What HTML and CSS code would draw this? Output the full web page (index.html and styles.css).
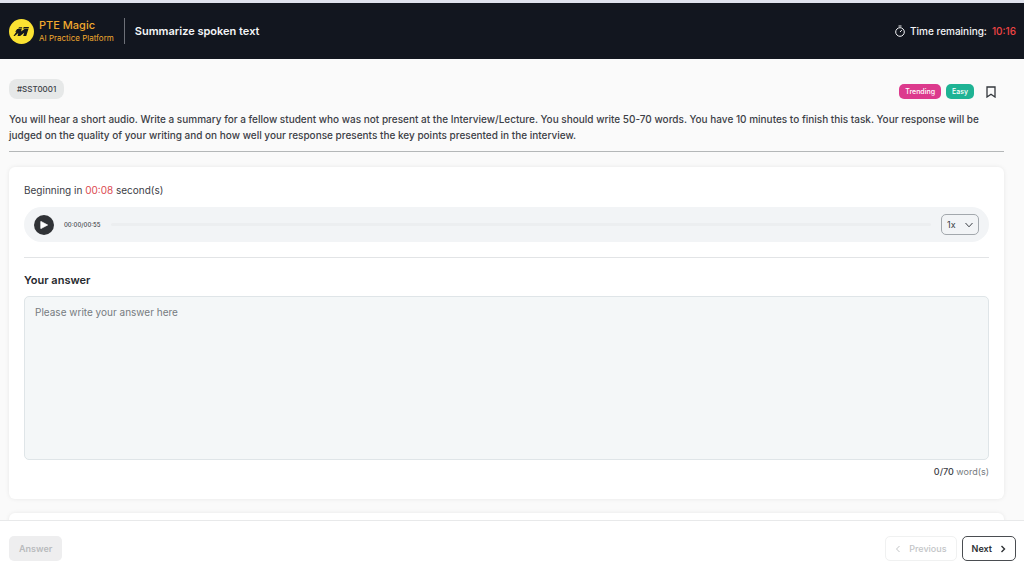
FILE: index.html
```html
<!DOCTYPE html>
<html lang="en">
<head>
    <meta charset="UTF-8">
    <meta name="viewport" content="width=device-width, initial-scale=1.0">
    <title>PTE Magic - Summarize spoken text</title>
    <link rel="stylesheet" href="styles.css">
</head>
<body>
    <!-- Top bar -->
    <header class="header">
        <div class="brand">
            <svg class="brand-logo" viewBox="0 0 26 26" aria-hidden="true">
                <circle cx="13" cy="13" r="13" fill="#fbe232"/>
                <path d="M8.500 10.500h4.700l-.6 2.600 3.400-2.600h4.200l-2.300 7.300h-3.200l1.200-3.600-4.300 3.600H8.900l.7-3.300-3.600 3.300H4.600l3.100-4.600H6.400z" fill="#14171d"/>
                <path d="M10.500 8.600h3.300l-.4 1.300h-4zM15.500 8.300h5.300l-.5 1.600h-6z" fill="#14171d"/>
            </svg>
            <div class="brand-text">
                <span class="brand-name">PTE Magic</span>
                <span class="brand-tagline">AI Practice Platform</span>
            </div>
        </div>
        <h1 class="page-title">Summarize spoken text</h1>
        <div class="timer">
            <svg class="timer-icon" viewBox="0 0 12 12" aria-hidden="true">
                <circle cx="6" cy="7" r="4.300"/>
                <path d="M4.500 1h3M6 7l1.800-1.900"/>
            </svg>
            <span>Time remaining:</span>
            <span class="timer-value">10:16</span>
        </div>
    </header>

    <main class="content">
        <!-- Question info -->
        <section class="question">
            <div class="question-top">
                <span class="question-id">#SST0001</span>
                <div class="tags">
                    <span class="tag tag-trending">Trending</span>
                    <span class="tag tag-easy">Easy</span>
                    <button class="bookmark" type="button" aria-label="Bookmark">
                        <svg viewBox="0 0 10 12" aria-hidden="true"><path d="M1 1h8v10L5 8.300 1 11z"/></svg>
                    </button>
                </div>
            </div>
            <p class="instructions">You will hear a short audio. Write a summary for a fellow student who was not present at the Interview/Lecture. You should write 50-70 words. You have 10 minutes to finish this task. Your response will be judged on the quality of your writing and on how well your response presents the key points presented in the interview.</p>
        </section>

        <!-- Audio and answer -->
        <section class="card">
            <p class="countdown">Beginning in <span class="countdown-value">00:08</span> second(s)</p>
            <div class="player">
                <button class="play" type="button" aria-label="Play">
                    <svg viewBox="0 0 10 10" aria-hidden="true"><path d="M1 .5L9.500 5 1 9.500z"/></svg>
                </button>
                <span class="player-time">00:00/00:55</span>
                <div class="player-track"></div>
                <div class="speed">
                    <select class="speed-select" aria-label="Playback speed">
                        <option>1x</option>
                    </select>
                    <svg class="speed-arrow" viewBox="0 0 8 6" aria-hidden="true"><path d="M.5 1L4 4.800 7.500 1"/></svg>
                </div>
            </div>
            <label class="answer-label" for="answer">Your answer</label>
            <textarea class="answer" id="answer" placeholder="Please write your answer here"></textarea>
            <p class="word-count"><span class="word-number">0/70</span> word(s)</p>
        </section>

        <section class="card"></section>
    </main>

    <!-- Bottom actions -->
    <footer class="footer">
        <button class="btn btn-answer" type="button" disabled>Answer</button>
        <div class="footer-nav">
            <button class="btn btn-previous" type="button" disabled>
                <svg class="btn-icon" viewBox="0 0 6 8" aria-hidden="true"><path d="M4.500 1L1.500 4l3 3"/></svg>
                Previous
            </button>
            <button class="btn btn-next" type="button">
                Next
                <svg class="btn-icon" viewBox="0 0 6 8" aria-hidden="true"><path d="M1.500 1l3 3-3 3"/></svg>
            </button>
        </div>
    </footer>
</body>
</html>
```

FILE: styles.css
```css
* {
    box-sizing: border-box;
}
body {
    margin: 0;
    height: 100vh;
    display: flex;
    flex-direction: column;
    overflow: hidden; /* only the content area moves */
    font-family: Inter, "Liberation Sans", sans-serif;
    font-size: 10px;
    line-height: 16px;
    color: #3c4046;
    background-color: #fafafa;
}
p, h1 {
    margin: 0;
}
button, select, textarea {
    font-family: inherit;
}
svg {
    display: block;
    fill: none;
    stroke: currentColor;
}

/* Top bar */
.header {
    flex: none;
    display: flex;
    align-items: center;
    height: 59px;
    padding: 0 8px 0 9px;
    color: #f4f5f7;
    background-color: #12161f;
    border-top: 3px solid #dfe2ec;
}
.brand {
    display: flex;
    align-items: center;
    gap: 5px;
    padding-right: 10px;
    border-right: 1px solid #6d7078;
}
.brand-logo {
    width: 25px;
    height: 25px;
    stroke: none;
}
.brand-text {
    display: flex;
    flex-direction: column;
    color: #f0a92e;
}
.brand-name {
    font-size: 11px;
    font-weight: 500;
    line-height: 14px;
}
.brand-tagline {
    font-size: 8px;
    line-height: 12px;
}
.page-title {
    margin-left: 10px;
    font-size: 11px;
    font-weight: 600;
}
.timer {
    display: flex;
    align-items: center;
    gap: 4px;
    margin-left: auto;
    font-weight: 500;
}
.timer-icon {
    width: 12px;
    height: 12px;
}
.timer-value {
    margin-left: 1px;
    color: #ef4444;
}

.content {
    flex: 1;
    min-height: 0;
    overflow: hidden;
    padding: 20px 20px 0 9px;
}
.question {
    padding-bottom: 8px;
    margin-bottom: 15px;
    border-bottom: 1px solid #b4b7b8;
}
.question-top {
    display: flex;
    justify-content: space-between;
    margin-bottom: 12px;
}
.question-id {
    padding: 2px 8px;
    font-size: 8px;
    font-weight: 500;
    background-color: #e6e8e8;
    border-radius: 8px;
}
.tags {
    display: flex;
    align-items: center;
    gap: 5px;
    padding-top: 5px;
    margin-right: 8px;
}
.tag {
    padding: 0 6px;
    font-size: 7px;
    font-weight: 500;
    line-height: 15px;
    color: #fff;
    border-radius: 5px;
}
.tag-trending {
    background-color: #dc3a8d;
}
.tag-easy {
    background-color: #1eb394;
}
.bookmark {
    width: 10px;
    height: 12px;
    margin-left: 7px;
    padding: 0;
    color: #33373c;
    background: none;
    border: none;
}
.bookmark svg {
    stroke-width: 1.3;
}
.instructions {
    font-weight: 500;
}

.card {
    min-height: 60px;
    padding: 15px;
    margin-bottom: 14px;
    background-color: #fff;
    border-radius: 6px;
    box-shadow: 0 0 4px rgba(0, 0, 0, 0.08);
}
.countdown-value {
    color: #dc4a50;
}

/* Audio player */
.player {
    display: flex;
    align-items: center;
    gap: 10px;
    height: 35px;
    margin: 9px 0 15px;
    padding: 0 10px;
    background-color: #f2f4f6;
    border-radius: 18px;
}
.play {
    display: flex;
    align-items: center;
    justify-content: center;
    width: 20px;
    height: 20px;
    padding: 0;
    color: #fff;
    background-color: #303236;
    border: none;
    border-radius: 50%;
}
.play svg {
    width: 8px;
    height: 8px;
    fill: currentColor;
}
.player-time {
    font-size: 6px;
    font-weight: 500;
}
.player-track {
    flex: 1;
    height: 3px;
    background-color: #eceef0;
    border-radius: 2px;
}
.speed {
    position: relative;
}
.speed-select {
    appearance: none;
    display: block;
    width: 38px;
    height: 21px;
    padding: 0 5px;
    font-size: 9px;
    color: #3c4046;
    background-color: transparent;
    border: 1px solid #a3a8ad;
    border-radius: 5px;
}
.speed-arrow {
    position: absolute; /* over the select */
    top: 8px;
    right: 6px;
    width: 8px;
    height: 6px;
    pointer-events: none;
}

/* Answer box */
.answer-label {
    display: block;
    padding: 14px 0 8px;
    font-size: 11px;
    font-weight: 600;
    color: #26292e;
    border-top: 1px solid #e2e4e6;
}
.answer {
    display: block;
    width: 100%;
    height: 164px;
    padding: 7px 10px;
    font-size: 10px;
    line-height: 16px;
    color: #3c4046;
    background-color: #f4f7f8;
    border: 1px solid #dfe5e8;
    border-radius: 5px;
    resize: none;
}
.answer::placeholder {
    color: #767b80;
}
.word-count {
    padding: 4px 0;
    font-size: 9px;
    text-align: right;
    color: #767b80;
}
.word-number {
    font-weight: 500;
    color: #3c4046;
}

/* Bottom actions */
.footer {
    flex: none;
    display: flex;
    justify-content: space-between;
    padding: 15px 8px 4px 9px;
    background-color: #fff;
    border-top: 1px solid #e8e9ea;
}
.footer-nav {
    display: flex;
    gap: 5px;
}
.btn {
    display: flex;
    align-items: center;
    gap: 8px;
    height: 25px;
    padding: 0 9px;
    font-size: 9px;
    font-weight: 500;
    border: 1px solid transparent;
    border-radius: 5px;
}
.btn-icon {
    width: 6px;
    height: 8px;
}
.btn-answer {
    font-weight: 600;
    color: #b9bbbd;
    background-color: #eeeeef;
}
.btn-previous {
    color: #c3c5c7;
    background-color: #fff;
    border-color: #f0f1f1;
}
.btn-next {
    font-weight: 600;
    color: #2d3034;
    background-color: #fff;
    border-color: #4a4d51;
}
.btn-next .btn-icon {
    stroke-width: 1.4;
}
```
